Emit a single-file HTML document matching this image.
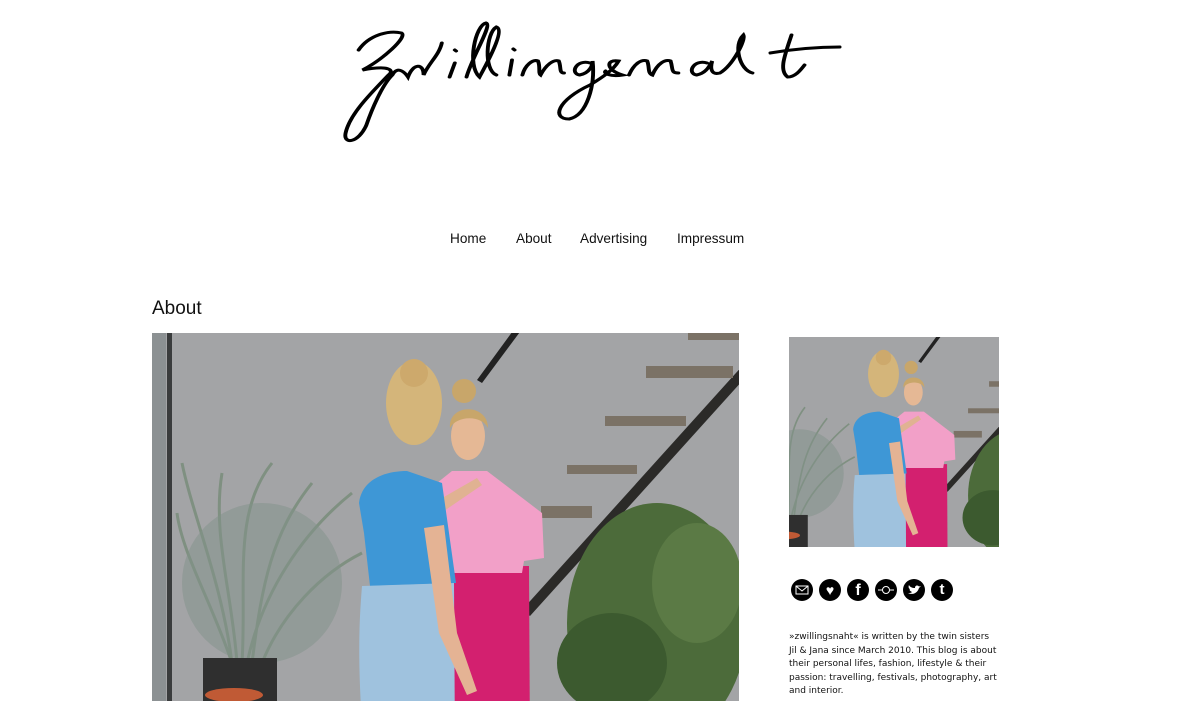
<!DOCTYPE html>
<html style="overflow:hidden"><head><meta charset="utf-8"><style>
body{margin:0;background:#fff;width:1200px;height:701px;overflow:hidden;position:relative;font-family:"Liberation Sans",sans-serif}
.nav{position:absolute;top:231px;font-size:13.6px;color:#111}
h1{position:absolute;left:152px;top:298px;margin:0;font-size:19px;font-weight:normal;font-family:"Liberation Sans",sans-serif;color:#111}
.txt{position:absolute;left:789px;top:631px;white-space:nowrap;font-family:"DejaVu Sans",sans-serif;font-size:9px;line-height:13.5px;color:#111}
.ic{position:absolute;top:579px;width:22px;height:22px;border-radius:50%;background:#000;color:#fff;text-align:center;font-weight:bold}
</style></head><body>
<svg style="position:absolute;left:330px;top:15px" width="520" height="135" viewBox="0 0 520 135" fill="none" stroke="#000" stroke-width="3" stroke-linecap="round" aria-label="zwillingsnaht">
<g transform="scale(1.3,1)">
<path d="M22 35 C30 20 45 15 55 18 C60 22 40 45 25 55 C45 50 50 55 45 60 C30 80 15 100 12 118 C10 130 22 128 28 110 C32 95 40 70 48 60 C52 50 58 58 60 62 C64 48 72 48 72 60 C76 48 84 40 86 28"/>
<path d="M96 48 L92 62 M96 35 l1 1"/>
<path d="M105 62 C110 40 125 10 120 8 C112 10 105 50 115 62 C120 50 135 15 128 12 C120 18 118 55 128 60"/>
<path d="M140 45 L138 60 M141 34 l1 1 M148 60 C150 50 156 44 160 46 C162 52 160 58 162 60 C166 50 172 44 176 46 C178 52 176 58 180 58"/>
<path d="M200 48 C190 44 184 58 192 60 C200 58 202 50 202 46 C204 70 198 100 184 104 C170 104 175 85 200 70 C210 62 218 55 222 46 C212 44 212 55 225 60 C215 62 210 58 212 56"/>
<path d="M230 60 C234 48 240 44 244 46 C246 52 244 58 248 60 C252 48 258 44 262 46 C264 54 262 58 268 58"/>
<path d="M290 48 C280 44 274 58 282 60 C290 58 292 50 294 46 C292 55 294 60 300 58 C310 50 320 25 318 20 C310 30 315 55 325 58"/>
<path d="M355 20 C350 40 345 55 352 62 C358 62 362 55 365 50"/>
</g>
<path d="M440 38 C470 33 490 32 510 32"/>
</svg>
<div class="nav" style="left:450px">Home</div>
<div class="nav" style="left:516px">About</div>
<div class="nav" style="left:580px">Advertising</div>
<div class="nav" style="left:677px">Impressum</div>
<h1>About</h1>
<svg width="0" height="0" style="position:absolute;top:0;left:0"><defs><g id="ph">
<rect x="-100" y="-50" width="800" height="500" fill="#a3a4a6"/>
<rect x="0" y="-50" width="14" height="500" fill="#8c9193"/>
<rect x="15" y="-50" width="5" height="500" fill="#3a3c3d"/>
<path d="M620 0 L370 277 L378 283 L620 15Z" fill="#2b2a28"/>
<path d="M374 -20 L325 47 L330 50 L382 -20Z" fill="#222"/>
<g fill="#7b7266"><rect x="536" y="-20" width="53" height="27"/><rect x="494" y="33" width="87" height="12"/><rect x="453" y="83" width="81" height="10"/><rect x="415" y="132" width="70" height="9"/><rect x="389" y="173" width="51" height="12"/></g>
<g stroke="#7f9081" stroke-width="3" fill="none">
<path d="M80 330 C70 250 40 180 30 130 M90 330 C95 250 80 180 120 130 M95 330 C110 260 150 200 200 160 M80 330 C60 270 30 220 25 180 M100 330 C110 250 120 200 160 150 M110 330 C130 280 170 240 210 220 M85 330 C80 260 60 200 70 140"/></g>
<ellipse cx="110" cy="250" rx="80" ry="80" fill="#82918a" opacity=".5"/>
<rect x="51" y="325" width="74" height="80" fill="#2f2f2f"/>
<ellipse cx="82" cy="362" rx="29" ry="7" fill="#c05a35"/>
<ellipse cx="505" cy="290" rx="90" ry="120" fill="#4c6b3a"/>
<ellipse cx="460" cy="330" rx="55" ry="50" fill="#3c5a2f"/>
<ellipse cx="545" cy="250" rx="45" ry="60" fill="#5b7a45"/>
<path d="M298 233 L377 233 L378 420 L300 420Z" fill="#d3206f"/>
<path d="M285 150 L300 138 L335 138 L390 180 L392 225 L372 228 L370 240 L298 240 Z" fill="#f2a0c8"/>
<ellipse cx="316" cy="103" rx="17" ry="24" fill="#e5b895"/>
<path d="M298 95 C296 70 336 70 336 95 C330 82 305 82 298 95Z" fill="#c8a66a"/>
<circle cx="312" cy="58" r="12" fill="#c8a66a"/>
<path d="M285 168 L325 145 L330 152 L292 178Z" fill="#e0b292"/>
<path d="M207 170 C210 145 235 138 255 138 L290 150 L304 250 L218 253 L212 200Z" fill="#3e97d6"/>
<path d="M210 253 L302 250 L303 420 L212 420 C205 330 207 290 210 253Z" fill="#9fc2de"/>
<path d="M272 195 L292 192 L305 300 L325 358 L315 362 L287 300Z" fill="#e4b394"/>
<ellipse cx="262" cy="70" rx="28" ry="42" fill="#d4b57a"/>
<circle cx="262" cy="40" r="14" fill="#cda96c"/>
</g></defs></svg>
<svg style="position:absolute;left:152px;top:333px" width="587" height="368" viewBox="0 0 587 368"><use href="#ph"/></svg>
<svg style="position:absolute;left:789px;top:337px" width="210" height="210" viewBox="91 3 380 380"><use href="#ph"/></svg>
<div class="ic" style="left:791px"><svg width="22" height="22"><rect x="5" y="7" width="12" height="8" fill="none" stroke="#fff"/><path d="M5 7 L11 12 L17 7" stroke="#fff" fill="none"/></svg></div>
<div class="ic" style="left:819px;font-size:14px;line-height:22px">♥</div>
<div class="ic" style="left:847px;font-size:16px;line-height:24px">f</div>
<div class="ic" style="left:875px"><svg width="22" height="22"><path d="M3 11 H19" stroke="#fff"/><circle cx="11" cy="11" r="3.5" fill="#000" stroke="#fff"/></svg></div>
<div class="ic" style="left:903px"><svg width="22" height="22"><path d="M5 14 C9 16 14 15 16 9 L18 7 L16 7.5 C15 6 12 6 12 9 C9 9 7 8 6 6 C5 8 6 10 7 10 C6 11 7 12 9 13 C8 14 7 14 5 14Z" fill="#fff"/></svg></div>
<div class="ic" style="left:931px;font-size:15px;line-height:22px">t</div>
<div class="txt">»zwillingsnaht« is written by the twin sisters<br>Jil &amp; Jana since March 2010. This blog is about<br>their personal lifes, fashion, lifestyle &amp; their<br>passion: travelling, festivals, photography, art<br>and interior.</div>
</body></html>
